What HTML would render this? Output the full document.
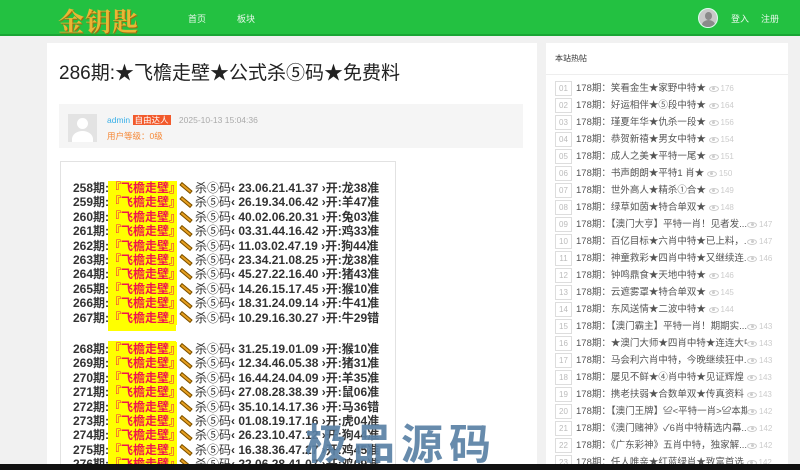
<!DOCTYPE html>
<html><head><meta charset="utf-8"><style>
*{margin:0;padding:0;box-sizing:border-box}
html,body{width:800px;height:470px;overflow:hidden}
body{background:#f1f1f1;font-family:"Liberation Sans","Noto Sans CJK SC",sans-serif;position:relative}
.hd{position:absolute;left:0;top:0;width:800px;height:36px;background:#23c141;border-bottom:2px solid #1aa534}
.logo{position:absolute;left:58px;top:2px;font-family:"Noto Serif CJK SC",serif;font-size:26px;font-weight:bold;color:#e9b634;letter-spacing:1px;text-shadow:1px 1px 0 #a26a10}
.nav{position:absolute;top:12px;font-size:9px;color:#e8f8ea}
.main{position:absolute;left:47px;top:43px;width:490px;height:421px;background:#fff}
.title{position:absolute;left:59px;top:58px;font-size:19px;color:#222}
.auth{position:absolute;left:59px;top:104px;width:464px;height:44px;background:#f5f5f5}
.av{position:absolute;left:9px;top:10px;width:29px;height:28px;background:#e3e3e3;overflow:hidden}
.av:before{content:"";position:absolute;left:9px;top:4px;width:11px;height:11px;border-radius:50%;background:#fff}
.av:after{content:"";position:absolute;left:4px;top:17px;width:21px;height:16px;border-radius:50% 50% 0 0;background:#fff}
.box{position:absolute;left:60px;top:161px;width:336px;height:303px;border:1px solid #e2e2e2;border-bottom:none}
.row{position:absolute;height:14.4px;font-size:12px;font-weight:bold;color:#333;white-space:nowrap;line-height:14.4px}
.y{display:inline-block;background:#ff0;color:#f0134e;width:68px;text-align:center}
.pen{display:inline-block;width:14px;height:4px;background:#e8a020;border:1px solid #7a5000;transform:rotate(40deg);margin:0 2px 2px 2px;vertical-align:middle}
.side{position:absolute;left:546px;top:43px;width:242px;height:421px;background:#fff}
.st{position:absolute;left:555px;top:53px;font-size:8px;color:#333}
.sl{position:absolute;left:546px;top:74px;width:242px;height:1px;background:#eee}
.it{position:absolute;left:555px;height:15px;font-size:9.5px;color:#555;white-space:nowrap;line-height:15px}
.n{display:inline-block;width:17px;height:15px;border:1px solid #ddd;color:#bbb;font-size:8px;text-align:center;line-height:13px;margin-right:4px;vertical-align:top}
.v{color:#ccc;font-size:8px}
.eye{display:inline-block;width:10px;height:6px;border:1px solid #ccc;border-radius:50%;position:relative;vertical-align:middle;margin-right:2px}
.eye:after{content:"";position:absolute;left:2.5px;top:0.5px;width:3px;height:3px;border-radius:50%;background:#ccc}
.wm{position:absolute;left:305px;top:422px;font-size:42px;font-weight:bold;color:#5b82a6;letter-spacing:6px;opacity:.92;line-height:46px}
.bb{position:absolute;left:0;top:464px;width:800px;height:6px;background:#111}
</style></head><body>
<div class="hd"></div>
<div class="logo">金钥匙</div>
<div class="nav" style="left:188px">首页</div>
<div class="nav" style="left:237px">板块</div>
<div style="position:absolute;left:698px;top:8px;width:20px;height:20px;border-radius:50%;border:1px solid #dfe;background:#c9c9c9;overflow:hidden"><div style="position:absolute;left:6px;top:3px;width:7px;height:8px;border-radius:50%;background:#8a8a8a"></div><div style="position:absolute;left:3px;top:11px;width:13px;height:10px;border-radius:50% 50% 0 0;background:#8a8a8a"></div></div>
<div class="nav" style="left:731px">登入</div>
<div class="nav" style="left:761px">注册</div>
<div class="main"></div>
<div class="title">286期:★飞檐走壁★公式杀⑤码★免费料</div>
<div class="auth"><div class="av"></div>
<div style="position:absolute;left:48px;top:10px;font-size:8.5px;color:#3ab0e8">admin <span style="background:#f25a2c;color:#fff;padding:0 2px">自由达人</span> <span style="color:#aaa;margin-left:6px">2025-10-13 15:04:36</span></div>
<div style="position:absolute;left:48px;top:26px;font-size:8.5px;color:#f58a3a">用户等级：0级</div></div>
<div class="box"></div>
<div style="position:absolute;left:108px;top:181px;width:68px;height:150px;background:#ff0"></div>
<div style="position:absolute;left:108px;top:341px;width:68px;height:123px;background:#ff0"></div>
<div id="rows"></div>
<div class="side"></div>
<div class="st">本站热帖</div><div class="sl"></div>
<div id="its"></div>
<div class="wm">极品源码</div>
<div class="bb"></div>
<script>
var a=[["258","23.06.21.41.37","龙38准"],["259","26.19.34.06.42","羊47准"],["260","40.02.06.20.31","兔03准"],["261","03.31.44.16.42","鸡33准"],["262","11.03.02.47.19","狗44准"],["263","23.34.21.08.25","龙38准"],["264","45.27.22.16.40","猪43准"],["265","14.26.15.17.45","猴10准"],["266","18.31.24.09.14","牛41准"],["267","10.29.16.30.27","牛29错"],null,["268","31.25.19.01.09","猴10准"],["269","12.34.46.05.38","猪31准"],["270","16.44.24.04.09","羊35准"],["271","27.08.28.38.39","鼠06准"],["272","35.10.14.17.36","马36错"],["273","01.08.19.17.16","虎04准"],["274","26.23.10.47.12","狗44准"],["275","16.38.36.47.27","鸡45准"],["276","22.06.28.41.07","鸡09准"]];
var h="";a.forEach(function(r,i){if(!r)return;var t=181+i*14.4;if(i>10)t=181+(i)*14.4+2.5;h+='<div class="row" style="left:73px;top:'+t+'px">'+r[0]+'期:<span class="y">『飞檐走壁』</span><span class="pen"></span><span style="font-weight:normal">杀⑤码</span>‹ '+r[1]+' ›开:'+r[2]+'</div>';});
document.getElementById("rows").innerHTML=h;
var s=[["笑看金生★家野中特★",176],["好运相伴★⑤段中特★",164],["瑾夏年华★仇杀一段★",156],["恭贺新禧★男女中特★",154],["成人之美★平特一尾★",151],["书声朗朗★平特1 肖★",150],["世外高人★精杀①合★",149],["绿草如茵★特合单双★",148],["【澳门大亨】平特一肖！见者发...",147,1],["百亿目标★六肖中特★已上料，...",147,1],["神童救彩★四肖中特★又继续连...",146,1],["钟鸣鼎食★天地中特★",146],["云遮雾罩★特合单双★",145],["东风送情★二波中特★",144],["【澳门霸主】平特一肖！期期实...",143,1],["★澳门大师★四肖中特★连连大中...",143,1],["马会利六肖中特，今晚继续狂中...",143,1],["屡见不鲜★④肖中特★见证辉煌",143],["携老扶弱★合数单双★传真资料",143],["【澳门王牌】≌<平特一肖>≌本期1...",142,1],["《澳门赌神》✓6肖中特精选内幕...",142,1],["《广东彩神》五肖中特，独家解...",142,1],["任人唯亲★红蓝绿肖★致富首选",142]];
h="";s.forEach(function(r,i){var n=(i<9?"0":"")+(i+1);h+='<div class="it" style="top:'+(81+i*17)+'px"><span class="n">'+n+'</span>178期：'+r[0]+(r[2]?'<span class="v" style="position:absolute;left:192px;background:#fff"><span class="eye"></span>'+r[1]+'</span>':' <span class="v"><span class="eye"></span>'+r[1]+'</span>')+'</div>';});
document.getElementById("its").innerHTML=h;
</script>
</body></html>
